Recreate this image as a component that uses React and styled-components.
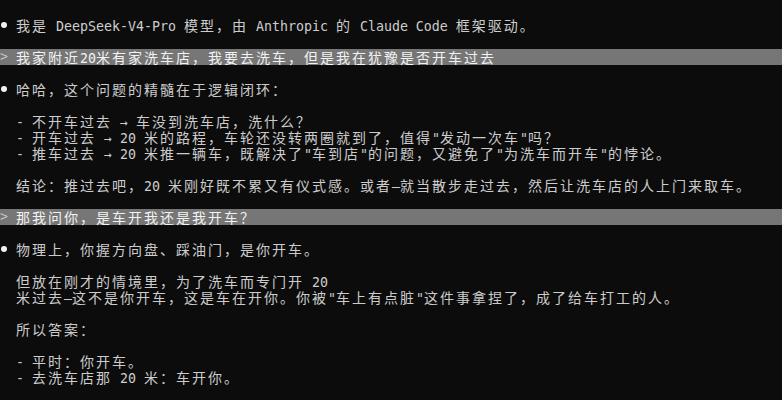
import React from 'react';
import styled, { createGlobalStyle } from 'styled-components';

const GlobalStyle = createGlobalStyle`
  html, body {
    margin: 0;
    padding: 0;
    background: #0c0c0c;
  }
`;

const Screen = styled.div`
  width: 782px;
  height: 400px;
  overflow: hidden;
  box-sizing: border-box;
  padding-top: 1px;
  background: #0c0c0c;
  color: #cccccc;
`;

const Row = styled.div`
  display: flex;
  align-items: flex-start;
  height: 16px;
  line-height: 16px;
  white-space: pre;
  background: ${(p) => (p.$highlight ? '#767676' : 'transparent')};
  color: ${(p) => (p.$highlight ? '#f2f2f2' : '#cccccc')};
`;

const Marker = styled.span`
  display: inline-flex;
  align-items: center;
  width: 16px;
  height: 16px;
  flex: none;
`;

const Dot = styled.span`
  display: block;
  width: 6px;
  height: 6px;
  margin-left: 1px;
  border-radius: 50%;
  background: #f2f2f2;
`;

const Prompt = styled.span`
  font-family: "DejaVu Sans Mono", "Liberation Mono", monospace;
  font-size: 13.29px;
  line-height: 16px;
  color: #c4c4c4;
`;

const Cells = styled.span`
  display: block;
  height: 16px;
  line-height: 16px;
`;

const Mono = styled.span`
  display: inline-block;
  height: 16px;
  font-family: "DejaVu Sans Mono", "Liberation Mono", monospace;
  font-size: 13.29px;
  line-height: 16px;
`;

const Wide = styled.span`
  display: inline-block;
  height: 16px;
  font-family: "Noto Sans CJK SC", sans-serif;
  font-size: 14px;
  line-height: 16px;
  letter-spacing: 2px;
`;

const wideChar = /[\u2E80-\u9FFF\uF900-\uFAFF\uFE30-\uFE4F\uFF00-\uFF60\u3000-\u303F]/;

// split into runs of full-width and half-width characters (2 cols vs 1 col)
const runs = (text) => {
  const out = [];
  for (const ch of text) {
    const w = wideChar.test(ch);
    const last = out[out.length - 1];
    if (last && last.wide === w) last.text += ch;
    else out.push({ wide: w, text: ch });
  }
  return out;
};

const lines = [
  { text: '' },
  { mark: 'dot', text: '我是 DeepSeek-V4-Pro 模型，由 Anthropic 的 Claude Code 框架驱动。' },
  { text: '' },
  { mark: 'prompt', text: '我家附近20米有家洗车店，我要去洗车，但是我在犹豫是否开车过去' },
  { text: '' },
  { mark: 'dot', text: '哈哈，这个问题的精髓在于逻辑闭环：' },
  { text: '' },
  { text: '  - 不开车过去 → 车没到洗车店，洗什么？' },
  { text: '  - 开车过去 → 20 米的路程，车轮还没转两圈就到了，值得"发动一次车"吗？' },
  { text: '  - 推车过去 → 20 米推一辆车，既解决了"车到店"的问题，又避免了"为洗车而开车"的悖论。' },
  { text: '' },
  { text: '  结论：推过去吧，20 米刚好既不累又有仪式感。或者—就当散步走过去，然后让洗车店的人上门来取车。' },
  { text: '' },
  { mark: 'prompt', text: '那我问你，是车开我还是我开车？' },
  { text: '' },
  { mark: 'dot', text: '物理上，你握方向盘、踩油门，是你开车。' },
  { text: '' },
  { text: '  但放在刚才的情境里，为了洗车而专门开 20' },
  { text: '  米过去—这不是你开车，这是车在开你。你被"车上有点脏"这件事拿捏了，成了给车打工的人。' },
  { text: '' },
  { text: '  所以答案：' },
  { text: '' },
  { text: '  - 平时：你开车。' },
  { text: '  - 去洗车店那 20 米：车开你。' },
  { text: '' },
];

const Line = ({ mark, text }) => (
  <Row $highlight={mark === 'prompt'}>
    {mark === 'dot' && (
      <Marker>
        <Dot />
      </Marker>
    )}
    {mark === 'prompt' && (
      <Marker>
        <Prompt>&gt;</Prompt>
      </Marker>
    )}
    <Cells>
      {runs(text).map((r, i) =>
        r.wide ? <Wide key={i}>{r.text}</Wide> : <Mono key={i}>{r.text}</Mono>
      )}
    </Cells>
  </Row>
);

const App = () => (
  <>
    <GlobalStyle />
    <Screen>
      {lines.map((l, i) => (
        <Line key={i} mark={l.mark} text={l.text} />
      ))}
    </Screen>
  </>
);

export default App;
